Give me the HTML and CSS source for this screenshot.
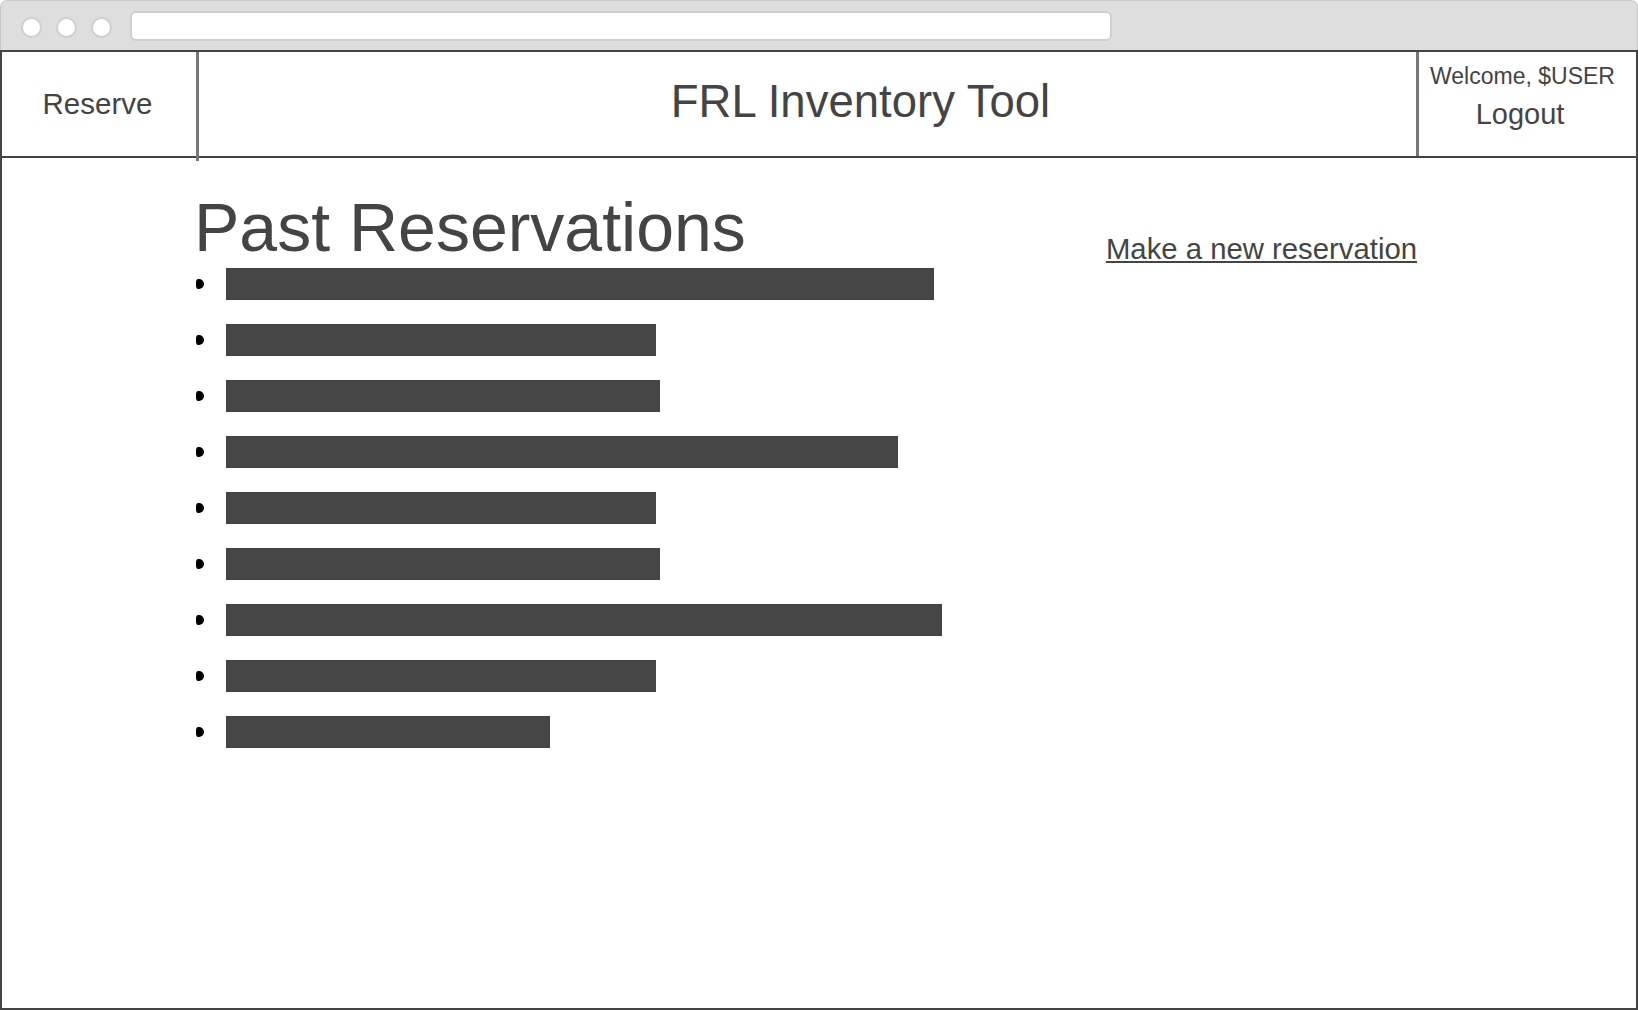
FILE: index.html
```html
<!DOCTYPE html>
<html lang="en">
<head>
<meta charset="utf-8">
<title>FRL Inventory Tool</title>
<link rel="stylesheet" href="styles.css">
</head>
<body>
<div class="chrome">
  <span class="dot"></span>
  <span class="dot"></span>
  <span class="dot"></span>
  <div class="url"></div>
</div>
<div class="window">
  <header class="header">
    <div class="cell reserve">Reserve</div>
    <div class="cell title">FRL Inventory Tool</div>
    <div class="cell user">
      <div class="welcome">Welcome, $USER</div>
      <div class="logout">Logout</div>
    </div>
  </header>
  <main class="main">
    <section class="past">
      <h1 class="heading">Past Reservations</h1>
      <ul class="list">
        <li class="item"><span class="bar" style="width:708px"></span></li>
        <li class="item"><span class="bar" style="width:430px"></span></li>
        <li class="item"><span class="bar" style="width:434px"></span></li>
        <li class="item"><span class="bar" style="width:672px"></span></li>
        <li class="item"><span class="bar" style="width:430px"></span></li>
        <li class="item"><span class="bar" style="width:434px"></span></li>
        <li class="item"><span class="bar" style="width:716px"></span></li>
        <li class="item"><span class="bar" style="width:430px"></span></li>
        <li class="item"><span class="bar" style="width:324px"></span></li>
      </ul>
    </section>
    <a class="new-link" href="#">Make a new reservation</a>
  </main>
</div>
</body>
</html>
```

FILE: styles.css
```css
html, body {
  margin: 0;
  padding: 0;
  background: #fff;
}

body {
  width: 1638px;
  height: 1010px;
  overflow: hidden;
  font-family: "Liberation Sans", Arial, sans-serif;
  color: #444;
}

.chrome {
  box-sizing: border-box;
  height: 50px;
  background: #dedede;
  border: 1px solid #c9c9c9;
  border-bottom: none;
  border-radius: 7px 7px 0 0;
  display: flex;
  align-items: flex-start;
  padding-left: 20px;
}

.dot {
  box-sizing: border-box;
  width: 21px;
  height: 21px;
  margin-top: 16px;
  margin-right: 14px;
  border-radius: 50%;
  background: #fff;
  border: 2px solid #cfcfcf;
}

.url {
  box-sizing: border-box;
  width: 982px;
  height: 30px;
  margin-top: 10px;
  margin-left: 4px;
  background: #fff;
  border: 2px solid #cfcfcf;
  border-radius: 6px;
}

.window {
  box-sizing: border-box;
  height: 960px;
  border: 2px solid #444;
  display: flex;
  flex-direction: column;
}

.header {
  box-sizing: border-box;
  height: 106px;
  display: flex;
  border-bottom: 2px solid #444;
}

.cell {
  display: flex;
  align-items: center;
  justify-content: center;
}

.reserve {
  position: relative;
  box-sizing: border-box;
  width: 197px;
  padding-right: 3px;
  border-right: 3px solid #777;
  font-size: 29.5px;
}

.reserve::after {
  content: "";
  position: absolute;
  right: -3px;
  bottom: -5px;
  width: 3px;
  height: 5px;
  background: #777;
}

.title {
  flex: 1;
  box-sizing: border-box;
  padding-left: 106px;
  padding-bottom: 4px;
  font-size: 45.5px;
}

.user {
  box-sizing: border-box;
  width: 220px;
  border-left: 3px solid #777;
  flex-direction: column;
  justify-content: flex-start;
  padding-top: 12px;
  padding-right: 10px;
}

.welcome {
  font-size: 23px;
  line-height: 25px;
}

.logout {
  margin-top: 9px;
  margin-right: 5px;
  font-size: 29px;
}

.main {
  flex: 1;
  display: flex;
  justify-content: space-between;
  align-items: flex-start;
  padding-left: 192px;
  padding-right: 219px;
}

.heading {
  margin: 39px 0 0;
  font-size: 68px;
  line-height: 60px;
  font-weight: normal;
  color: #444;
}

.list {
  list-style: none;
  margin: 0 0 0 2px;
  padding: 0;
}

.item {
  display: flex;
  align-items: center;
  gap: 22px;
  height: 32px;
  padding: 11px 0 13px;
}

.item::before {
  content: "";
  width: 8px;
  height: 10px;
  background: #000;
  border-radius: 2px 5px 5px 2px / 4px 5px 5px 4px;
  flex: none;
}

.bar {
  display: block;
  height: 32px;
  background: #454545;
}

.new-link {
  margin-top: 74px;
  font-size: 29.3px;
  color: #444;
  text-decoration: underline;
}
```
